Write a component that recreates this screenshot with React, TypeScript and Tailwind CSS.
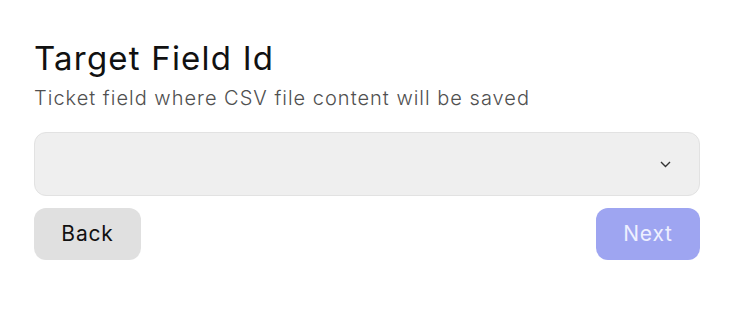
import React from "react";

export default function App() {
  return (
    <div className="w-[742px] h-[312px] bg-white" style={{ fontFamily: '"Inter", "Noto Sans", sans-serif' }}>
      <div className="pl-[34px] pr-[42px] pt-[38px]">
        <h1 className="text-[33px] leading-[40px] text-[#111111] font-normal tracking-[1.2px]">Target Field Id</h1>
        <p className="mt-[8px] text-[20px] leading-[24px] text-[#505050] font-light tracking-[1px]">Ticket field where CSV file content will be saved</p>
        <div className="mt-[22px] h-[64px] rounded-[12px] border border-[#e2e2e2] bg-[#efefef] flex items-center justify-end pr-[28px]">
          <svg width="11" height="7" viewBox="0 0 11 7" fill="none">
            <path d="M1 1l4.5 4.5L10 1" stroke="#333" strokeWidth="1.4" />
          </svg>
        </div>
        <div className="mt-[12px] flex justify-between">
          <button className="h-[52px] w-[107px] rounded-[12px] bg-[#e0e0e0] text-[21px] text-[#111111] tracking-[0.8px]">Back</button>
          <button className="h-[52px] w-[104px] rounded-[12px] bg-[#9ea5f1] text-[21px] text-[#eef0ff] tracking-[0.8px]">Next</button>
        </div>
      </div>
    </div>
  );
}
